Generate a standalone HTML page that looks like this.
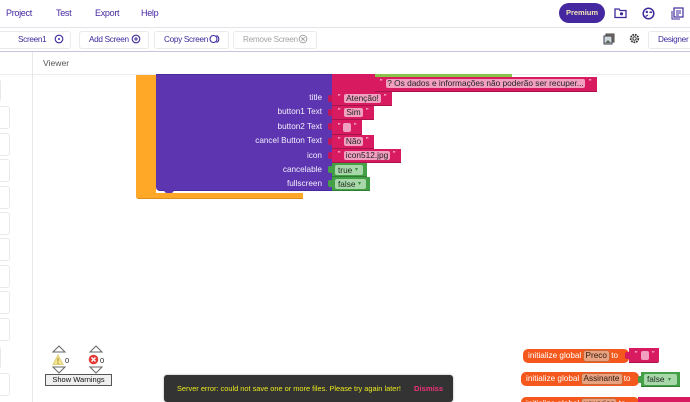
<!DOCTYPE html>
<html><head><meta charset="utf-8"><style>
html,body{margin:0;padding:0;background:#fff}
#p{position:relative;width:690px;height:402px;overflow:hidden;background:#fff;font-family:"Liberation Sans",sans-serif}
#p div,#p span.a,#p svg{position:absolute}
.m{top:6px;font-size:9px;letter-spacing:-.3px;line-height:14px;color:#4527a0;white-space:nowrap}
.b{top:31px;height:16px;border:1px solid #e9e9ee;border-radius:3px;font-size:8.2px;letter-spacing:-.3px;line-height:16px;color:#3f2a9c;white-space:nowrap;background:#fff}
.l{left:-6px;width:14px;height:21px;border:1px solid #e9e9e9;border-radius:3px;background:#fff}
.t{right:368px;color:#f2effa;font-size:8.2px;line-height:12px;white-space:nowrap}
.pk{background:#d81b60;border-bottom:1px solid #a8134a;box-sizing:border-box}
.gr{background:#43a047;border-bottom:1px solid #2f7d33;box-sizing:border-box}
.f{background:#f1a1bf;color:#222;font-size:8.3px;line-height:9px;height:9px;border-radius:2px;text-align:center;white-space:nowrap}
.q{color:#fff;font-size:7px;line-height:10px}
.g{background:#a8d8aa;color:#1d2b1d;font-size:8.3px;line-height:10px;height:10px;border-radius:2px;white-space:nowrap;padding-left:3px;box-sizing:border-box}
.n{width:4px;height:7px;border-radius:2px 0 0 2px}
.o{background:#f4581c;border-radius:5px;color:#fff;font-size:8.2px;line-height:14px;white-space:nowrap}
.v{background:#e8a27f;color:#2b1a12;border-radius:3px;padding:0 2px;margin:0 -1px;border:1px solid #c9683a;font-size:8.2px;line-height:10px;display:inline-block}
</style></head><body><div id="p">

<div class="m" style="left:6px">Project</div>
<div class="m" style="left:56px">Test</div>
<div class="m" style="left:95px">Export</div>
<div class="m" style="left:141px">Help</div>

<div style="left:559px;top:3px;width:46px;height:20px;background:#4527a0;border-radius:10px;color:#f3e6b5;font-size:7.5px;font-weight:bold;line-height:20px;text-align:center">Premium</div>
<svg style="left:614px;top:7px" width="13" height="12" viewBox="0 0 13 12"><path d="M1 2h4l1 1.500h6v7H1z" fill="none" stroke="#3f2a9c" stroke-width="1.300"/><circle cx="7.500" cy="6.800" r="1.600" fill="#3f2a9c"/></svg>
<svg style="left:642px;top:7px" width="13" height="13" viewBox="0 0 13 13"><circle cx="6.500" cy="6.500" r="5.300" fill="none" stroke="#3f2a9c" stroke-width="1.500"/><circle cx="4.800" cy="5" r="1.200" fill="#3f2a9c"/><rect x="7.500" y="4.500" width="2.500" height="1.500" fill="#3f2a9c"/><path d="M3.500 9.500 6 8" stroke="#3f2a9c" stroke-width="1.300"/></svg>
<svg style="left:671px;top:7px" width="13" height="13" viewBox="0 0 13 13"><rect x="3" y="1" width="9" height="9" fill="none" stroke="#3f2a9c" stroke-width="1.200"/><path d="M1 4v8h8M5 4h5M5 6h5M5 8h3" fill="none" stroke="#3f2a9c"/></svg>

<div style="left:0;top:27px;width:690px;height:1px;background:#e4e4e8"></div>
<div style="left:0;top:51px;width:690px;height:1px;background:#c9c2e2"></div>

<div class="b" style="left:-2px;width:73px;padding-left:19px;box-sizing:border-box;height:18px">Screen1</div>
<svg style="left:54px;top:34px" width="10" height="10"><circle cx="5" cy="5" r="3.800" fill="none" stroke="#3f2a9c" stroke-width="1.100"/><circle cx="5" cy="5" r="1" fill="#3f2a9c"/></svg>
<div class="b" style="left:79px;width:70px;height:18px;padding-left:9px;box-sizing:border-box">Add Screen</div>
<svg style="left:131px;top:34px" width="10" height="10"><circle cx="5" cy="5" r="3.800" fill="none" stroke="#3f2a9c" stroke-width="1.100"/><path d="M3 5h4M5 3v4" stroke="#3f2a9c"/></svg>
<div class="b" style="left:154px;width:75px;height:18px;padding-left:9px;box-sizing:border-box">Copy Screen</div>
<svg style="left:209px;top:34px" width="12" height="10"><circle cx="4.500" cy="5" r="3.500" fill="none" stroke="#3f2a9c" stroke-width="1.100"/><path d="M7.500 1.500a3.800 3.800 0 0 1 0 7" fill="none" stroke="#3f2a9c" stroke-width="1.100"/></svg>
<div class="b" style="left:233px;width:84px;height:18px;padding-left:9px;box-sizing:border-box;color:#a3a3a3">Remove Screen</div>
<svg style="left:298px;top:34px" width="10" height="10"><circle cx="5" cy="5" r="3.800" fill="none" stroke="#a3a3a3" stroke-width="1"/><path d="M3.300 3.300l3.400 3.400M6.700 3.300l-3.400 3.400" stroke="#a3a3a3"/></svg>

<svg style="left:603px;top:33px" width="12" height="12" viewBox="0 0 12 12"><rect x="3" y="1" width="8" height="8" fill="#8a7a6a" stroke="#444"/><rect x="1" y="3" width="8" height="8" fill="#cfd8dc" stroke="#3a3a4a"/><path d="M2 10l3-3 3 3" fill="#5a6a5a"/></svg>
<svg style="left:629px;top:33px" width="11" height="11" viewBox="0 0 11 11"><circle cx="5.500" cy="5.500" r="3.800" fill="none" stroke="#333" stroke-width="1.700" stroke-dasharray="1.800 .8"/><circle cx="5.500" cy="5.500" r="1.700" fill="none" stroke="#333"/></svg>
<div class="b" style="left:648px;width:60px;height:18px;padding-left:9px;box-sizing:border-box">Designer</div>

<div style="left:43px;top:57px;font-size:8.6px;line-height:12px;color:#555">Viewer</div>
<div style="left:0;top:74px;width:690px;height:1px;background:#ececec"></div>
<div style="left:32px;top:52px;width:1px;height:350px;background:#e8e8e8"></div>

<div class="l" style="top:79px;left:-15px"></div>
<div class="l" style="top:106px"></div>
<div class="l" style="top:133px"></div>
<div class="l" style="top:159px"></div>
<div class="l" style="top:186px"></div>
<div class="l" style="top:212px"></div>
<div class="l" style="top:238px"></div>
<div class="l" style="top:265px"></div>
<div class="l" style="top:291px"></div>
<div class="l" style="top:318px"></div>
<div class="l" style="top:346px;left:-15px"></div>
<div class="l" style="top:373px"></div>

<!-- orange -->
<div style="left:136px;top:75px;width:20px;height:124px;background:#ffa726;border-radius:0 0 0 3px"></div>
<div style="left:136px;top:192px;width:167px;height:7px;background:#ffa726;border-bottom:1px solid #e08e1a;box-sizing:border-box;border-radius:0 0 0 3px"></div>
<div style="left:156px;top:190px;width:176px;height:3px;background:#fff"></div>
<!-- purple -->
<div style="left:156px;top:74px;width:176px;height:117px;background:#5e35b1;border-top:1px solid #4a2aa0;border-bottom:1px solid #4527a0;box-sizing:border-box;border-radius:0 0 0 4px"></div>
<div style="left:164px;top:190px;width:10px;height:3px;background:#5e35b1;border-radius:0 0 5px 5px"></div>

<div class="t" style="top:92px">title</div>
<div class="t" style="top:106px">button1 Text</div>
<div class="t" style="top:121px">button2 Text</div>
<div class="t" style="top:135px">cancel Button Text</div>
<div class="t" style="top:150px">icon</div>
<div class="t" style="top:164px">cancelable</div>
<div class="t" style="top:178px">fullscreen</div>

<!-- top pink -->
<div style="left:332px;top:74px;width:43px;height:18px;background:#d81b60"></div>
<div style="left:512px;top:74px;width:178px;height:1px;background:#ececec"></div>
<div style="left:375px;top:74px;width:137px;height:3px;background:#8bc34a"></div>
<div class="pk" style="left:375px;top:77px;width:222px;height:15px"></div>
<div class="f" style="left:386px;top:79px;width:199px;color:#222">? Os dados e informações não poderão ser recuper...</div>
<div class="a q" style="left:380px;top:78px">"</div>
<div class="a q" style="left:589px;top:78px">"</div>

<div class="pk" style="left:332px;top:92px;width:60px;height:14px"></div>
<div class="f" style="left:344px;top:94px;width:37px">Atenção!</div>
<div class="a q" style="left:338px;top:93px">"</div><div class="a q" style="left:384px;top:93px">"</div>

<div class="pk" style="left:332px;top:106px;width:42px;height:14px"></div>
<div class="f" style="left:344px;top:108px;width:19px">Sim</div>
<div class="a q" style="left:338px;top:107px">"</div><div class="a q" style="left:366px;top:107px">"</div>

<div class="pk" style="left:332px;top:120px;width:30px;height:15px"></div>
<div class="f" style="left:343px;top:123px;width:8px"></div>
<div class="a q" style="left:338px;top:122px">"</div><div class="a q" style="left:354px;top:122px">"</div>

<div class="pk" style="left:332px;top:135px;width:42px;height:14px"></div>
<div class="f" style="left:344px;top:137px;width:19px">Não</div>
<div class="a q" style="left:338px;top:136px">"</div><div class="a q" style="left:366px;top:136px">"</div>

<div class="pk" style="left:332px;top:149px;width:69px;height:14px"></div>
<div class="f" style="left:344px;top:151px;width:46px">icon512.jpg</div>
<div class="a q" style="left:338px;top:150px">"</div><div class="a q" style="left:393px;top:150px">"</div>

<div class="gr" style="left:332px;top:163px;width:35px;height:14px"></div>
<div class="g" style="left:335px;top:165px;width:28px">true</div>
<div class="a" style="left:355px;top:166px;color:#3a8a3e;font-size:6px;line-height:8px">▾</div>
<div class="gr" style="left:332px;top:177px;width:38px;height:14px"></div>
<div class="g" style="left:335px;top:179px;width:31px">false</div>
<div class="a" style="left:358px;top:180px;color:#3a8a3e;font-size:6px;line-height:8px">▾</div>

<div class="n" style="left:328px;top:95px;background:#c2185b"></div>
<div class="n" style="left:328px;top:109px;background:#c2185b"></div>
<div class="n" style="left:328px;top:123px;background:#c2185b"></div>
<div class="n" style="left:328px;top:138px;background:#c2185b"></div>
<div class="n" style="left:328px;top:152px;background:#c2185b"></div>
<div class="n" style="left:328px;top:166px;background:#43a047"></div>
<div class="n" style="left:328px;top:180px;background:#43a047"></div>

<!-- warnings -->
<svg style="left:52px;top:345px" width="62" height="42" viewBox="0 0 62 42">
<path d="M1 7 7 1 13 7z" fill="none" stroke="#666"/>
<path d="M38 7 44 1 50 7z" fill="none" stroke="#666"/>
<path d="M1 22 7 28 13 22z" fill="none" stroke="#666"/>
<path d="M38 22 44 28 50 22z" fill="none" stroke="#666"/>
<path d="M1 19.500 6 10 11 19.500z" fill="#f3e48f" stroke="#e0d07a"/><path d="M6 13v3.500M6 17.500v1.500" stroke="#a08a30" stroke-width="1"/>
<circle cx="41.500" cy="14.500" r="4.800" fill="#e53935"/><path d="M39.500 12.500l4 4M43.500 12.500l-4 4" stroke="#fff" stroke-width="1.400"/>
</svg>
<div class="a" style="left:65px;top:356px;font-size:7.500px;line-height:9px;color:#222">0</div>
<div class="a" style="left:100px;top:356px;font-size:7.500px;line-height:9px;color:#222">0</div>
<div style="left:45px;top:374px;width:67px;height:12px;background:#efefef;border:1px solid #555;box-sizing:border-box;font-size:7.5px;line-height:10px;text-align:center;color:#111;white-space:nowrap">Show Warnings</div>

<!-- toast -->
<div style="left:164px;top:375px;width:289px;height:27px;background:#333;border-radius:3px;box-shadow:0 0 2px #aaa"></div>
<div style="left:177px;top:384px;font-size:7.4px;line-height:10px;color:#eaea1e;white-space:nowrap">Server error: could not save one or more files. Please try again later!</div>
<div style="left:414px;top:384px;font-size:7.6px;font-weight:bold;line-height:10px;color:#f0307a;white-space:nowrap">Dismiss</div>

<!-- bottom right blocks -->
<div class="o" style="left:523px;top:349px;width:106px;height:14px;padding-left:5px;box-sizing:border-box">initialize global <span class="v">Preco</span> to</div>
<div class="pk" style="left:629px;top:348px;width:30px;height:15px;border-radius:0 0 2px 0"></div>
<div class="f" style="left:641px;top:351px;width:8px"></div>
<div class="a q" style="left:635px;top:350px">"</div><div class="a q" style="left:652px;top:350px">"</div>
<div class="n" style="left:625px;top:352px;background:#d81b60"></div>

<div class="o" style="left:521px;top:372px;width:118px;height:14px;padding-left:5px;box-sizing:border-box">initialize global <span class="v">Assinante</span> to</div>
<div class="gr" style="left:641px;top:372px;width:39px;height:15px"></div>
<div class="g" style="left:644px;top:374px;width:33px;height:11px">false</div>
<div class="a" style="left:668px;top:376px;color:#3a8a3e;font-size:6px;line-height:8px">▾</div>
<div class="n" style="left:638px;top:376px;background:#43a047"></div>

<div class="o" style="left:521px;top:397px;width:118px;height:14px;padding-left:5px;box-sizing:border-box">initialize global <span class="v">usuarios</span> to</div>
<div class="pk" style="left:638px;top:397px;width:52px;height:14px"></div>

</div></body></html>
